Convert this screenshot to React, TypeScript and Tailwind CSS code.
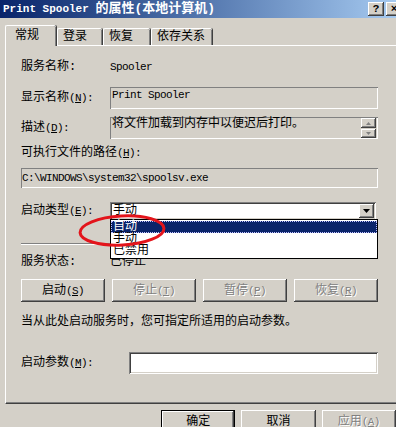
import React from "react";

const raised =
  "shadow-[inset_-1px_-1px_#404040,inset_1px_1px_#ffffff,inset_-2px_-2px_#808080,inset_2px_2px_#d4d0c8]";
const sunkenThin = "shadow-[inset_1px_1px_#808080,inset_-1px_-1px_#ffffff]";
const sunken =
  "shadow-[inset_1px_1px_#808080,inset_-1px_-1px_#ffffff,inset_2px_2px_#404040,inset_-2px_-2px_#d4d0c8]";

function L({ children }: { children: React.ReactNode }) {
  return <span className="text-[11px] tracking-[-0.6px]">{children}</span>;
}

function Acc({ k }: { k: string }) {
  return (
    <L>
      (<u>{k}</u>):
    </L>
  );
}

function Btn({ label, k, disabled }: { label: string; k: string; disabled?: boolean }) {
  return (
    <div
      className={`flex h-[23px] w-[84px] items-center justify-center ${raised} ${
        disabled ? "text-[#808080] [text-shadow:1px_1px_0_#ffffff]" : ""
      }`}
    >
      {label}
      <L>
        (<u>{k}</u>)
      </L>
    </div>
  );
}

export default function App() {
  return (
    <div className="relative h-[427px] w-[396px] overflow-hidden bg-[#d4d0c8] font-['Liberation_Mono','Noto_Sans_CJK_SC',monospace] text-[12px] leading-[14px] text-black">
      {/* Title bar */}
      <div className="flex h-[18px] items-center bg-gradient-to-r from-[#0a246a] to-[#a6caf0] pl-[3px]">
        <span className="text-[13px] font-bold text-white">
          <span className="text-[11px]">Print Spooler </span>的属性(本地计算机)
        </span>
        <div className="ml-auto mr-[-6px] flex gap-[2px]">
          <div className={`flex h-[14px] w-[16px] items-center justify-center bg-[#d4d0c8] text-[11px] font-bold leading-none ${raised}`}>
            ?
          </div>
          <div className={`flex h-[14px] w-[16px] items-center justify-center bg-[#d4d0c8] text-[11px] font-bold leading-none ${raised}`}>
            ×
          </div>
        </div>
      </div>

      {/* Tabs */}
      <div className="flex h-[27px] items-end pl-[5px]">
        <div className="relative z-10 mb-[-1px] flex h-[21px] w-[51px] items-start rounded-t-[2px] border-l border-t border-white bg-[#d4d0c8] pl-[9px] pt-[3px] shadow-[inset_-1px_0_#808080,1px_0_#404040]">
          常规
        </div>
        <div className="ml-[1px] flex h-[17px] w-[45px] items-center rounded-t-[2px] border-l border-t border-white pl-[5px] shadow-[inset_-1px_0_#808080,1px_0_#404040]">
          登录
        </div>
        <div className="ml-[1px] flex h-[17px] w-[47px] items-center rounded-t-[2px] border-l border-t border-white pl-[5px] shadow-[inset_-1px_0_#808080,1px_0_#404040]">
          恢复
        </div>
        <div className="ml-[1px] flex h-[17px] w-[61px] items-center rounded-t-[2px] border-l border-t border-white pl-[5px] shadow-[inset_-1px_0_#808080,1px_0_#404040]">
          依存关系
        </div>
      </div>

      {/* Panel */}
      <div className="ml-[5px] box-border flex h-[359px] w-[400px] flex-col border-b border-l border-t border-b-[#404040] border-l-white border-t-white pl-[15px] shadow-[inset_0_-1px_#808080]">
        {/* 服务名称 */}
        <div className="mt-[14px] flex h-[14px] items-center">
          <div className="w-[89px]">服务名称:</div>
          <L>Spooler</L>
        </div>

        {/* 显示名称 */}
        <div className="mt-[13px] flex items-center">
          <div className="w-[89px]">
            显示名称<Acc k="N" />
          </div>
          <div className={`h-[22px] w-[268px] pl-[2px] pt-[1px] ${sunkenThin}`}>
            <L>Print Spooler</L>
          </div>
        </div>

        {/* 描述 */}
        <div className="mt-[8px] flex items-center">
          <div className="w-[89px]">
            描述<Acc k="D" />
          </div>
          <div className={`flex h-[22px] w-[268px] pl-[2px] ${sunkenThin}`}>
            <div className="pt-[0px]">将文件加载到内存中以便迟后打印。</div>
            <div className="ml-auto mr-[2px] mt-[1px] flex flex-col gap-[1px]">
              <div className={`flex h-[10px] w-[15px] items-center justify-center ${raised}`}>
                <svg width="5" height="3" viewBox="0 0 5 3">
                  <path d="M2.5 0 L5 3 L0 3 Z" fill="#808080" />
                </svg>
              </div>
              <div className={`flex h-[9px] w-[15px] items-center justify-center ${raised}`}>
                <svg width="5" height="3" viewBox="0 0 5 3">
                  <path d="M0 0 L5 0 L2.5 3 Z" fill="#808080" />
                </svg>
              </div>
            </div>
          </div>
        </div>

        {/* 路径 */}
        <div className="mt-[7px] flex h-[14px] items-center">
          可执行文件的路径<Acc k="H" />
        </div>
        <div className={`mt-[8px] flex h-[20px] w-[357px] items-center pl-[1px] ${sunkenThin}`}>
          <L>C:\WINDOWS\system32\spoolsv.exe</L>
        </div>

        {/* 启动类型 */}
        <div className="mt-[14px] flex items-center">
          <div className="w-[89px]">
            启动类型<Acc k="E" />
          </div>
          <div className={`flex h-[18px] w-[266px] items-center bg-white pl-[3px] ${sunken}`}>
            <span>手动</span>
            <div className={`ml-auto mr-[2px] flex h-[14px] w-[15px] items-center justify-center bg-[#d4d0c8] ${raised}`}>
              <svg width="7" height="4" viewBox="0 0 7 4">
                <path d="M0 0 L7 0 L3.5 4 Z" fill="#000" />
              </svg>
            </div>
          </div>
        </div>

        {/* separator */}
        <div className="mt-[23px] h-[2px] w-[357px] border-b border-t border-b-white border-t-[#808080]" />

        {/* 服务状态 */}
        <div className="mt-[10px] flex h-[14px] items-center">
          <div className="w-[89px]">服务状态:</div>
          <div>已停止</div>
        </div>

        {/* Buttons */}
        <div className="mt-[10px] flex gap-[7px]">
          <Btn label="启动" k="S" />
          <Btn label="停止" k="T" disabled />
          <Btn label="暂停" k="P" disabled />
          <Btn label="恢复" k="R" disabled />
        </div>

        <div className="mt-[13px] h-[14px]">当从此处启动服务时，您可指定所适用的启动参数。</div>

        {/* 启动参数 */}
        <div className="mt-[23px] flex items-center">
          <div className="w-[108px]">
            启动参数<Acc k="M" />
          </div>
          <div className={`h-[22px] w-[249px] bg-white ${sunken}`} />
        </div>
      </div>

      {/* Bottom buttons */}
      <div className="mt-[6px] flex gap-[6px] pl-[161px]">
        <div className="h-[23px] w-[75px] border border-black">
          <div className={`flex h-full w-full items-center justify-center ${raised}`}>确定</div>
        </div>
        <div className={`flex h-[23px] w-[75px] items-center justify-center ${raised}`}>取消</div>
        <div className={`flex h-[23px] w-[75px] items-center justify-center text-[#808080] [text-shadow:1px_1px_0_#ffffff] ${raised}`}>
          应用
          <L>
            (<u>A</u>)
          </L>
        </div>
      </div>

      {/* Dropdown list overlay */}
      <div className="absolute left-[110px] top-[219px] z-20 h-[40px] w-[268px] border border-black bg-white pt-[1px]">
        <div className="h-[12px] border border-dotted border-[#c0c0ff] bg-[#0a246a] pl-[1px] leading-[10px] text-white">
          自动
        </div>
        <div className="h-[12px] pl-[2px] leading-[12px]">手动</div>
        <div className="h-[12px] pl-[2px] leading-[12px]">已禁用</div>
      </div>

      {/* Red ellipse annotation */}
      <svg
        className="absolute left-[76px] top-[212px] z-30"
        width="92"
        height="38"
        viewBox="0 0 92 38"
      >
        <ellipse
          cx="46"
          cy="18.5"
          rx="42"
          ry="14.5"
          fill="none"
          stroke="#e3141b"
          strokeWidth="3"
          transform="rotate(-3 46 18.5)"
        />
      </svg>
    </div>
  );
}
